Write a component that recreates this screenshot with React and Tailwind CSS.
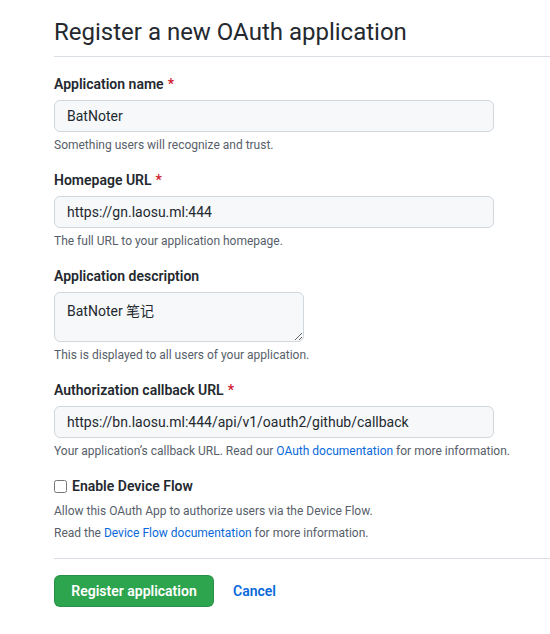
export default function App() {
  const font = { fontFamily: 'Roboto, "Noto Sans CJK SC", sans-serif' };

  const Label = ({ children, required }) => (
    <label className="block text-[14px] font-semibold leading-5 text-[#24292f]">
      {children}
      {required && <span className="ml-1 text-[#cf222e]">*</span>}
    </label>
  );

  const Help = ({ children }) => (
    <p className="mt-1 text-[12px] leading-[18px] text-[#57606a]">{children}</p>
  );

  const Input = ({ value }) => (
    <input
      readOnly
      value={value}
      className="mt-1.5 block h-8 w-[440px] rounded-md border border-[#d0d7de] bg-[#f6f8fa] px-3 text-[14px] text-[#24292f] outline-none"
    />
  );

  return (
    <div className="min-h-screen bg-white pl-[54px]" style={font}>
      <div className="border-b border-[#d8dee4] pt-[16px] pb-[8px]">
        <h1 className="text-[24px] font-normal leading-[32px] text-[#24292f]">
          Register a new OAuth application
        </h1>
      </div>

      <div className="pt-[17px]">
        <div>
          <Label required>Application name</Label>
          <Input value="BatNoter" />
          <Help>Something users will recognize and trust.</Help>
        </div>

        <div className="mt-4">
          <Label required>Homepage URL</Label>
          <Input value="https://gn.laosu.ml:444" />
          <Help>The full URL to your application homepage.</Help>
        </div>

        <div className="mt-4">
          <Label>Application description</Label>
          <textarea
            readOnly
            value="BatNoter 笔记"
            className="mt-1.5 block h-[50px] w-[250px] resize-y rounded-md border border-[#d0d7de] bg-[#f6f8fa] px-3 py-[8px] text-[14px] leading-5 text-[#24292f] outline-none"
          />
          <Help>This is displayed to all users of your application.</Help>
        </div>

        <div className="mt-4">
          <Label required>Authorization callback URL</Label>
          <Input value="https://bn.laosu.ml:444/api/v1/oauth2/github/callback" />
          <Help>
            Your application’s callback URL. Read our{" "}
            <a className="text-[#0969da]">OAuth documentation</a> for more information.
          </Help>
        </div>

        <div className="mt-4">
          <label className="flex items-center gap-[5px] text-[14px] font-semibold leading-5 text-[#24292f]">
            <input type="checkbox" className="m-0 h-[13px] w-[13px]" />
            Enable Device Flow
          </label>
          <p className="mt-1 text-[12px] leading-[22px] text-[#57606a]">
            Allow this OAuth App to authorize users via the Device Flow.
            <br />
            Read the <a className="text-[#0969da]">Device Flow documentation</a> for more
            information.
          </p>
        </div>
      </div>

      <div className="mt-[14px] border-t border-[#d8dee4] pt-4">
        <div className="flex items-center gap-[19px]">
          <button className="h-8 w-[160px] rounded-md border border-[#1b1f2426] bg-[#2da44e] text-[14px] font-semibold text-white">
            Register application
          </button>
          <a className="text-[14px] font-semibold text-[#0969da]">Cancel</a>
        </div>
      </div>
    </div>
  );
}
